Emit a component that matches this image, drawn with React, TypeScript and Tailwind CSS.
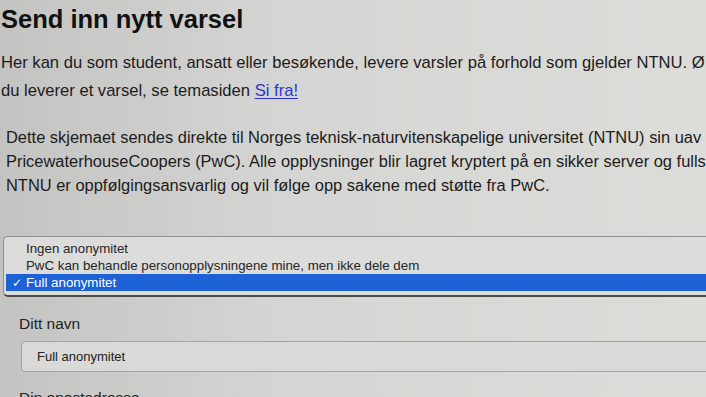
export default function App() {
  const options = [
    { label: "Ingen anonymitet", selected: false },
    { label: "PwC kan behandle personopplysningene mine, men ikke dele dem", selected: false },
    { label: "Full anonymitet", selected: true },
  ];

  return (
    <div className="relative h-[397px] w-[706px] overflow-hidden bg-linear-to-r from-[#c3c3c1] via-[#d5d5d3] via-40% to-[#dcdcd9] font-['Liberation_Sans',Arial,sans-serif] text-[#1c1c1c]">
      {/* Heading */}
      <h1 className="pl-[1px] pt-[4px] text-[25.5px] font-bold leading-[30px] whitespace-nowrap text-[#111]">
        Send inn nytt varsel
      </h1>

      {/* Intro */}
      <p className="mt-[15px] pl-[1px] text-[16.6px] leading-[28px]">
        <span className="block whitespace-nowrap">
          Her kan du som student, ansatt eller besøkende, levere varsler på forhold som gjelder NTNU. Ø
        </span>
        <span className="block whitespace-nowrap">
          du leverer et varsel, se temasiden{" "}
          <a href="#" className="text-[#2a36cf] underline underline-offset-2">
            Si fra!
          </a>
        </span>
      </p>

      <p className="mt-[20px] pl-[6px] text-[16.45px] leading-[24px]">
        <span className="block whitespace-nowrap">
          Dette skjemaet sendes direkte til Norges teknisk-naturvitenskapelige universitet (NTNU) sin uav
        </span>
        <span className="block whitespace-nowrap">
          PricewaterhouseCoopers (PwC). Alle opplysninger blir lagret kryptert på en sikker server og fulls
        </span>
        <span className="block whitespace-nowrap">
          NTNU er oppfølgingsansvarlig og vil følge opp sakene med støtte fra PwC.
        </span>
      </p>

      {/* Open select menu */}
      <div className="ml-[3px] mt-[39px] w-[760px] rounded-[5px] border-t border-l border-[#8f8f8d] border-b-2 border-b-[#4a4a48] bg-[#dcdcda] px-[2px] pt-[3px] pb-[4px] text-[13.3px]">
        {options.map((o) => (
          <div
            key={o.label}
            className={`flex h-[17px] items-center whitespace-nowrap ${
              o.selected ? "bg-[#1c61d6] text-white" : "text-[#262626]"
            }`}
          >
            <span className="w-[20px] pl-[6px] text-[12px] leading-none font-['DejaVu_Sans',sans-serif]">
              {o.selected ? "✓" : ""}
            </span>
            <span className="leading-[17px]">{o.label}</span>
          </div>
        ))}
      </div>

      {/* Name field */}
      <label className="mt-[17px] block pl-[19px] text-[15.5px] leading-[20px] text-[#222]">
        Ditt navn
      </label>
      <div className="ml-[21px] mt-[7px] h-[31px] w-[760px] rounded-[4px] border border-[#a3a3a1] bg-[#d9d9d7] pl-[15px] text-[13px] leading-[29px] text-[#222]">
        Full anonymitet
      </div>

      <label className="mt-[16px] block pl-[19px] text-[15.5px] leading-[20px] text-[#222]">
        Din epostadresse
      </label>
    </div>
  );
}
